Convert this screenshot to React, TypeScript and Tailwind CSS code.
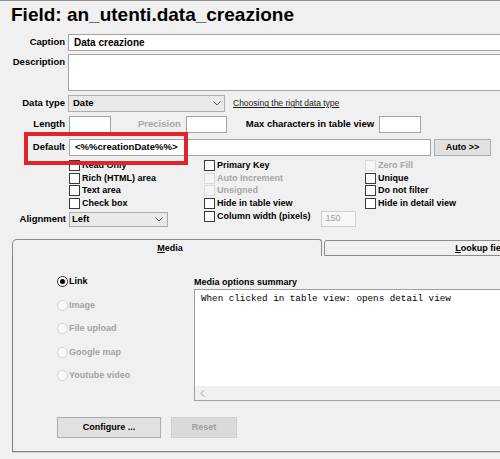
import React from "react";

type CheckProps = { label: string; disabled?: boolean };

function Check({ label, disabled = false }: CheckProps) {
  return (
    <div className="flex items-center gap-[2px]">
      <span
        className={
          disabled
            ? "h-[11px] w-[11px] shrink-0 border border-[#dadada] bg-[#f5f5f5]"
            : "h-[11px] w-[11px] shrink-0 border border-[#3a3a3a] bg-white"
        }
      />
      <span
        className={
          disabled
            ? "whitespace-nowrap text-[9px] font-bold leading-[11px] text-[#a6a6a6]"
            : "whitespace-nowrap text-[9px] font-bold leading-[11px] text-black"
        }
      >
        {label}
      </span>
    </div>
  );
}

type RadioProps = { label: string; checked?: boolean; disabled?: boolean };

function Radio({ label, checked = false, disabled = false }: RadioProps) {
  return (
    <div className="flex h-[23.5px] items-center gap-[1px]">
      <span
        className={
          disabled
            ? "flex h-[11px] w-[11px] items-center justify-center rounded-full border border-[#d2d2d2] bg-[#fafafa]"
            : "flex h-[11px] w-[11px] items-center justify-center rounded-full border border-[#333] bg-white"
        }
      >
        {checked && <span className="h-[5px] w-[5px] rounded-full bg-black" />}
      </span>
      <span
        className={
          disabled
            ? "text-[9px] font-bold leading-[11px] text-[#a3a3a3]"
            : "text-[9px] font-bold leading-[11px] text-black"
        }
      >
        {label}
      </span>
    </div>
  );
}

function Chevron() {
  return (
    <svg width="8" height="5" viewBox="0 0 8 5" className="shrink-0">
      <polyline points="0.5,0.5 4,4 7.5,0.5" fill="none" stroke="#606060" strokeWidth="1" />
    </svg>
  );
}

export default function App() {
  return (
    <div className="h-[459px] w-[500px] overflow-hidden border-t border-[#8e8e8e] bg-[#f0f0f0] font-['Liberation_Sans',Arial,sans-serif] text-black">
      <div className="w-[660px]">
        <h1 className="h-[33px] pl-[11px] pt-[2px] text-[19px] font-bold leading-[24px]">
          Field: an_utenti.data_creazione
        </h1>

        {/* Caption */}
        <div className="flex h-[17px] items-center">
          <span className="w-[65px] shrink-0 text-right text-[9.5px] font-bold">Caption</span>
          <div className="ml-[3px] flex h-full flex-1 items-center border border-[#a3a3a3] bg-white px-[5px] text-[10px] font-bold">
            Data creazione
          </div>
        </div>

        {/* Description */}
        <div className="mt-[3px] flex h-[37px] items-start">
          <span className="w-[65px] shrink-0 pt-[2px] text-right text-[9.5px] font-bold leading-[12px]">
            Description
          </span>
          <div className="ml-[3px] h-full flex-1 border border-[#a3a3a3] bg-white" />
        </div>

        {/* Data type */}
        <div className="mt-[4px] flex h-[17px] items-center">
          <span className="w-[65px] shrink-0 text-right text-[9.5px] font-bold">Data type</span>
          <div className="ml-[3px] flex h-full w-[157px] items-center justify-between border border-[#adadad] bg-[#e9e9e9] pl-[4px] pr-[3px] text-[9.5px] font-bold">
            <span>Date</span>
            <Chevron />
          </div>
          <span className="ml-[8px] text-[8.5px] text-[#1a1a1a] underline">Choosing the right data type</span>
        </div>

        {/* Length / Precision / Max characters */}
        <div className="mt-[4px] flex h-[17px] items-center">
          <span className="w-[65px] shrink-0 text-right text-[9.5px] font-bold">Length</span>
          <div className="ml-[4px] h-full w-[42px] border border-[#a3a3a3] bg-white" />
          <span className="ml-[27px] text-[9.5px] font-bold text-[#a6a6a6]">Precision</span>
          <div className="ml-[5px] h-full w-[41px] border border-[#a3a3a3] bg-white" />
          <span className="ml-[19px] whitespace-nowrap text-[9.5px] font-bold">Max characters in table view</span>
          <div className="ml-[5px] h-full w-[42px] border border-[#a3a3a3] bg-white" />
        </div>

        {/* Default */}
        <div className="relative mt-[6px] flex h-[17px] items-center">
          <span className="w-[65px] shrink-0 text-right text-[9.5px] font-bold">Default</span>
          <div className="ml-[4px] flex h-full w-[362px] items-center border border-[#a3a3a3] bg-white px-[5px] text-[9.5px] font-bold">
            &lt;%%creationDate%%&gt;
          </div>
          <div className="ml-[3px] flex h-full w-[57px] items-center justify-center border border-[#adadad] bg-[#e1e1e1] text-[9px] font-bold">
            Auto &gt;&gt;
          </div>
          <div className="pointer-events-none absolute left-[24px] top-[-7px] h-[33px] w-[164px] border-4 border-[#e3232b]" />
        </div>

        {/* Flags */}
        <div className="mt-[3px] grid grid-cols-[69px_135px_161px_1fr] grid-rows-[12.75px_12.75px_12.75px_12.75px_17px]">
          <div />
          <div className="flex items-center"><Check label="Read Only" /></div>
          <div className="flex items-center"><Check label="Primary Key" /></div>
          <div className="flex items-center"><Check label="Zero Fill" disabled /></div>

          <div />
          <div className="flex items-center"><Check label="Rich (HTML) area" /></div>
          <div className="flex items-center"><Check label="Auto Increment" disabled /></div>
          <div className="flex items-center"><Check label="Unique" /></div>

          <div />
          <div className="flex items-center"><Check label="Text area" /></div>
          <div className="flex items-center"><Check label="Unsigned" disabled /></div>
          <div className="flex items-center"><Check label="Do not filter" /></div>

          <div />
          <div className="flex items-center"><Check label="Check box" /></div>
          <div className="flex items-center"><Check label="Hide in table view" /></div>
          <div className="flex items-center"><Check label="Hide in detail view" /></div>

          <div className="flex items-end justify-end pb-[2px] pr-[3px]">
            <span className="text-[9.5px] font-bold leading-[12px]">Alignment</span>
          </div>
          <div className="flex items-end">
            <div className="flex h-[15px] w-[99px] items-center justify-between border border-[#adadad] bg-[#e9e9e9] pl-[2px] pr-[4px] text-[9.5px] font-bold">
              <span>Left</span>
              <Chevron />
            </div>
          </div>
          <div className="flex items-start gap-[10px] pt-[1px]">
            <Check label="Column width (pixels)" />
            <div className="flex h-[16px] w-[35px] items-center border border-[#d0d0d0] bg-[#f7f7f7] pl-[4px] text-[9px] text-[#9b9b9b]">
              150
            </div>
          </div>
          <div />
        </div>

        {/* Tabs */}
        <div className="ml-[12px] mt-[12px]">
          <div className="flex h-[17px] items-end">
            <div className="flex h-[17px] w-[310px] justify-center rounded-tl-[5px] rounded-tr-[3px] border-l border-r border-t border-[#8c8c8c] pl-[6px] pt-[3px]">
              <span className="text-[9px] font-bold leading-[11px]">
                <span className="underline">M</span>edia
              </span>
            </div>
            <div className="ml-[2px] flex h-[16px] w-[316px] justify-center rounded-t-[3px] border border-[#8c8c8c] pt-[2px]">
              <span className="text-[9px] font-bold leading-[11px]">
                <span className="underline">L</span>ookup field
              </span>
            </div>
          </div>

          <div className="w-[628px] border-b border-l border-r border-[#7f7f7f] pb-[13px] pl-[44px] pt-[14px] shadow-[0_1px_0_#d4d4d4]">
            <div className="flex">
              <div className="w-[137px] shrink-0">
                <Radio label="Link" checked />
                <Radio label="Image" disabled />
                <Radio label="File upload" disabled />
                <Radio label="Google map" disabled />
                <Radio label="Youtube video" disabled />
              </div>
              <div className="flex-1 pt-[6px]">
                <div className="h-[13px] text-[9px] font-bold leading-[12px]">Media options summary</div>
                <div className="flex h-[112px] flex-col border border-[#a0a0a0] bg-white">
                  <div className="flex-1 pl-[6px] pt-[3px] font-['Liberation_Mono','Courier_New',monospace] text-[9.25px] leading-[11px]">
                    When clicked in table view: opens detail view
                  </div>
                  <div className="flex h-[14px] items-center bg-[#f0f0f0] pl-[5px]">
                    <svg width="5" height="7" viewBox="0 0 5 7">
                      <polyline points="4,0.5 1,3.5 4,6.5" fill="none" stroke="#a0a0a0" strokeWidth="1" />
                    </svg>
                  </div>
                </div>
              </div>
            </div>

            <div className="mt-[16px] flex">
              <div className="flex h-[21px] w-[104px] items-center justify-center border border-[#adadad] bg-[#e1e1e1] text-[9px] font-bold">
                Configure ...
              </div>
              <div className="ml-[10px] flex h-[21px] w-[66px] items-center justify-center border border-[#cfcfcf] bg-[#dadada] text-[9px] font-bold text-[#9e9e9e]">
                Reset
              </div>
            </div>
          </div>
        </div>
      </div>
    </div>
  );
}
